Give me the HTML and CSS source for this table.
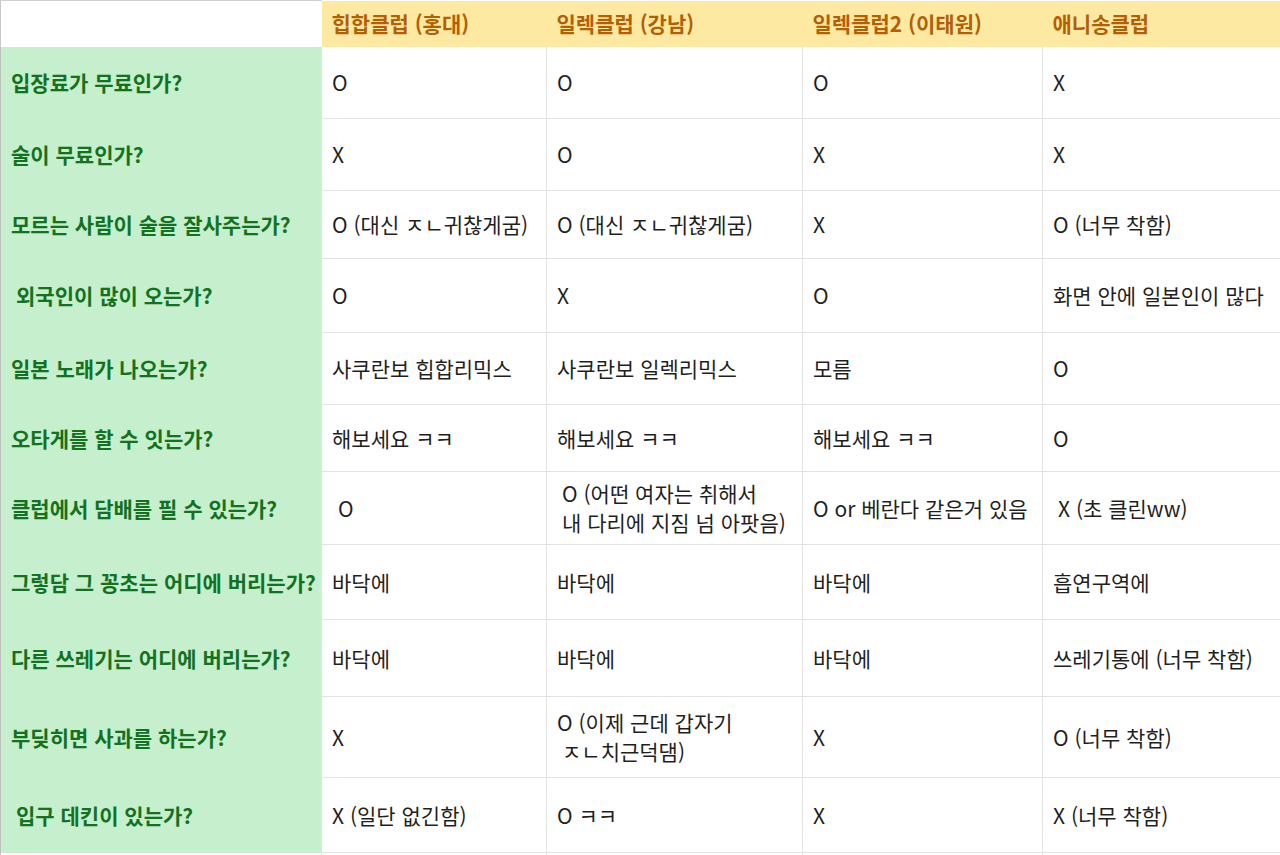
FILE: index.html
```html
<!DOCTYPE html>
<html lang="ko">
<head>
<meta charset="utf-8">
<title>클럽 비교</title>
<link rel="stylesheet" href="styles.css">
</head>
<body>
<table class="sheet">
  <colgroup>
    <col class="c0"><col class="c1"><col class="c2"><col class="c3"><col class="c4">
  </colgroup>
  <thead>
    <tr class="head">
      <th class="corner"></th>
      <th>힙합클럽 (홍대)</th>
      <th>일렉클럽 (강남)</th>
      <th>일렉클럽2 (이태원)</th>
      <th>애니송클럽</th>
    </tr>
  </thead>
  <tbody>
    <tr class="r1">
      <th>입장료가 무료인가?</th>
      <td>O</td><td>O</td><td>O</td><td>X</td>
    </tr>
    <tr class="r2">
      <th>술이 무료인가?</th>
      <td>X</td><td>O</td><td>X</td><td>X</td>
    </tr>
    <tr class="r3">
      <th>모르는 사람이 술을 잘사주는가?</th>
      <td>O (대신 ㅈㄴ귀찮게굼)</td><td>O (대신 ㅈㄴ귀찮게굼)</td><td>X</td><td>O (너무 착함)</td>
    </tr>
    <tr class="r4">
      <th><span class="sp"></span>외국인이 많이 오는가?</th>
      <td>O</td><td>X</td><td>O</td><td>화면 안에 일본인이 많다</td>
    </tr>
    <tr class="r5">
      <th>일본 노래가 나오는가?</th>
      <td>사쿠란보 힙합리믹스</td><td>사쿠란보 일렉리믹스</td><td>모름</td><td>O</td>
    </tr>
    <tr class="r6">
      <th>오타게를 할 수 잇는가?</th>
      <td>해보세요 ㅋㅋ</td><td>해보세요 ㅋㅋ</td><td>해보세요 ㅋㅋ</td><td>O</td>
    </tr>
    <tr class="r7">
      <th>클럽에서 담배를 필 수 있는가?</th>
      <td><span class="sp2"></span>O</td>
      <td class="multi"><span class="sp"></span>O (어떤 여자는 취해서<br><span class="sp"></span>내 다리에 지짐 넘 아팟음)</td>
      <td>O or 베란다 같은거 있음</td>
      <td><span class="sp"></span>X (초 클린ww)</td>
    </tr>
    <tr class="r8">
      <th>그렇담 그 꽁초는 어디에 버리는가?</th>
      <td>바닥에</td><td>바닥에</td><td>바닥에</td><td>흡연구역에</td>
    </tr>
    <tr class="r9">
      <th>다른 쓰레기는 어디에 버리는가?</th>
      <td>바닥에</td><td>바닥에</td><td>바닥에</td><td>쓰레기통에 (너무 착함)</td>
    </tr>
    <tr class="r10">
      <th>부딪히면 사과를 하는가?</th>
      <td>X</td>
      <td class="multi">O (이제 근데 갑자기<br><span class="sp"></span>ㅈㄴ치근덕댐)</td>
      <td>X</td>
      <td>O (너무 착함)</td>
    </tr>
    <tr class="r11">
      <th><span class="sp"></span>입구 데킨이 있는가?</th>
      <td>X (일단 없긴함)</td><td>O ㅋㅋ</td><td>X</td><td>X (너무 착함)</td>
    </tr>
    <tr class="tail">
      <th></th><td></td><td></td><td></td><td></td>
    </tr>
  </tbody>
</table>
</body>
</html>
```

FILE: styles.css
```css
html, body {
  margin: 0;
  padding: 0;
  background: #ffffff;
}

body {
  font-family: "Noto Sans CJK KR", "Noto Sans", sans-serif;
  color: #1f1f1f;
  overflow: hidden;
}

.sheet {
  border-collapse: collapse;
  table-layout: fixed;
  width: 1281px;
  font-size: 21px;
}

.c0 { width: 321px; }
.c1 { width: 225px; }
.c2 { width: 256px; }
.c3 { width: 240px; }
.c4 { width: 239px; }

.sheet th,
.sheet td {
  padding: 0 0 0 10px;
  text-align: left;
  vertical-align: middle;
  white-space: nowrap;
  overflow: hidden;
  line-height: 29px;
}

.sheet td {
  border-left: 1px solid #e3e3e3;
  border-bottom: 1px solid #e3e3e3;
  font-weight: 400;
}

.head th {
  background: #fde9a1;
  color: #b45f06;
  font-weight: 700;
  height: 45px;
  padding-bottom: 1px;
  border: none;
}

.head .corner {
  background: #ffffff;
  border-top: 1px solid #d0d0d0;
  border-left: 1px solid #c8c8c8;
}

tbody th {
  background: #c6efce;
  color: #127220;
  font-weight: 700;
  padding-left: 11px;
  border-left: 1px solid #c0c0c0;
  border-bottom: none;
}

.sp {
  display: inline-block;
  width: 5px;
}

.sp2 {
  display: inline-block;
  width: 6px;
}

.r1 > * { height: 71px; }
.r2 > * { height: 71px; }
.r3 > * { height: 67px; }
.r4 > * { height: 73px; }
.r5 > * { height: 71px; }
.r6 > * { height: 66px; }
.r7 > * { height: 72px; }
.r8 > * { height: 74px; }
.r9 > * { height: 76px; }
.r10 > * { height: 80px; }
.r11 > * { height: 74px; }
.tail > * { height: 10px; }

.tail th {
  background: #ffffff;
  border-left: 1px solid #c0c0c0;
}
```
